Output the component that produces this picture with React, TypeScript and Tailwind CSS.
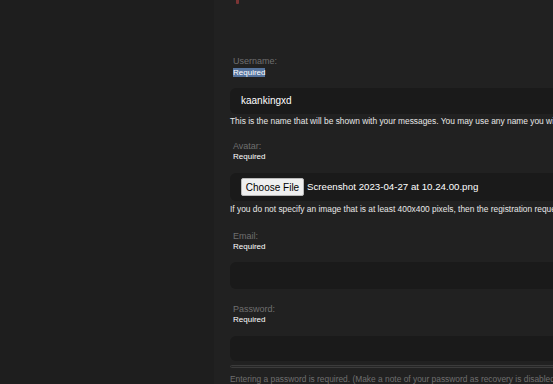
export default function App() {
  const font = { fontFamily: '"Liberation Sans", Arial, sans-serif' };

  return (
    <div style={font} className="flex w-[553px] h-[384px] overflow-hidden bg-[#1e1e1e] text-white">
      {/* left rail */}
      <div className="w-[214px] shrink-0 bg-[#1e1e1e]" />

      {/* registration form */}
      <div className="flex-1 min-w-[600px] bg-[#212121] pl-[16px] flex flex-col">
        <div className="ml-[6px] w-[3px] h-[4px] bg-[#7b3434] rounded-b-[1px]" />

        {/* Username */}
        <div className="mt-[52px] ml-[3px] text-[9px] leading-[11px] text-[#6f6f6f]">Username:</div>
        <div className="ml-[3px] mt-[1px] text-[8px] leading-[10px]">
          <span className="bg-[#56749e] text-white">Required</span>
        </div>
        <div className="mt-[10px] h-[28px] w-[600px] rounded-[6px] bg-[#1a1a1a] flex items-center pl-[11px] text-[10px]">
          kaankingxd
        </div>
        <div className="mt-[2px] text-[8.4px] leading-[10px] whitespace-nowrap text-[#e8e8e8]">
          This is the name that will be shown with your messages. You may use any name you wish to use.
        </div>

        {/* Avatar */}
        <div className="mt-[15px] ml-[3px] text-[9px] leading-[11px] text-[#6f6f6f]">Avatar:</div>
        <div className="ml-[3px] text-[8px] leading-[10px]">Required</div>
        <div className="mt-[11px] h-[30px] w-[600px] rounded-[6px] bg-[#1a1a1a] flex items-center pl-[11px] gap-[3px] text-[9.7px] whitespace-nowrap">
          <span className="h-[18px] w-[63px] flex items-center justify-center rounded-[2px] bg-[#efefef] border border-[#b8b8b8] text-black text-[10px]">
            Choose File
          </span>
          <span>Screenshot 2023-04-27 at 10.24.00.png</span>
        </div>
        <div className="mt-[3px] text-[8.4px] leading-[10px] whitespace-nowrap text-[#e8e8e8]">
          If you do not specify an image that is at least 400x400 pixels, then the registration request will be rejected.
        </div>

        {/* Email */}
        <div className="mt-[17px] ml-[3px] text-[9px] leading-[11px] text-[#6f6f6f]">Email:</div>
        <div className="ml-[3px] text-[8px] leading-[10px]">Required</div>
        <div className="mt-[10px] h-[28px] w-[600px] rounded-[6px] bg-[#1a1a1a]" />

        {/* Password */}
        <div className="mt-[15px] ml-[3px] text-[9px] leading-[11px] text-[#6f6f6f]">Password:</div>
        <div className="ml-[3px] text-[8px] leading-[10px]">Required</div>
        <div className="mt-[11px] h-[27px] w-[600px] rounded-[6px] bg-[#1a1a1a]" />
        <div className="mt-[4px] h-[3px] w-[600px] rounded-full bg-[#262626] border border-[#3b3b3b]" />
        <div className="mt-[6px] text-[8.4px] leading-[10px] whitespace-nowrap text-[#6f6f6f]">
          Entering a password is required. (Make a note of your password as recovery is disabled.)
        </div>
      </div>
    </div>
  );
}
